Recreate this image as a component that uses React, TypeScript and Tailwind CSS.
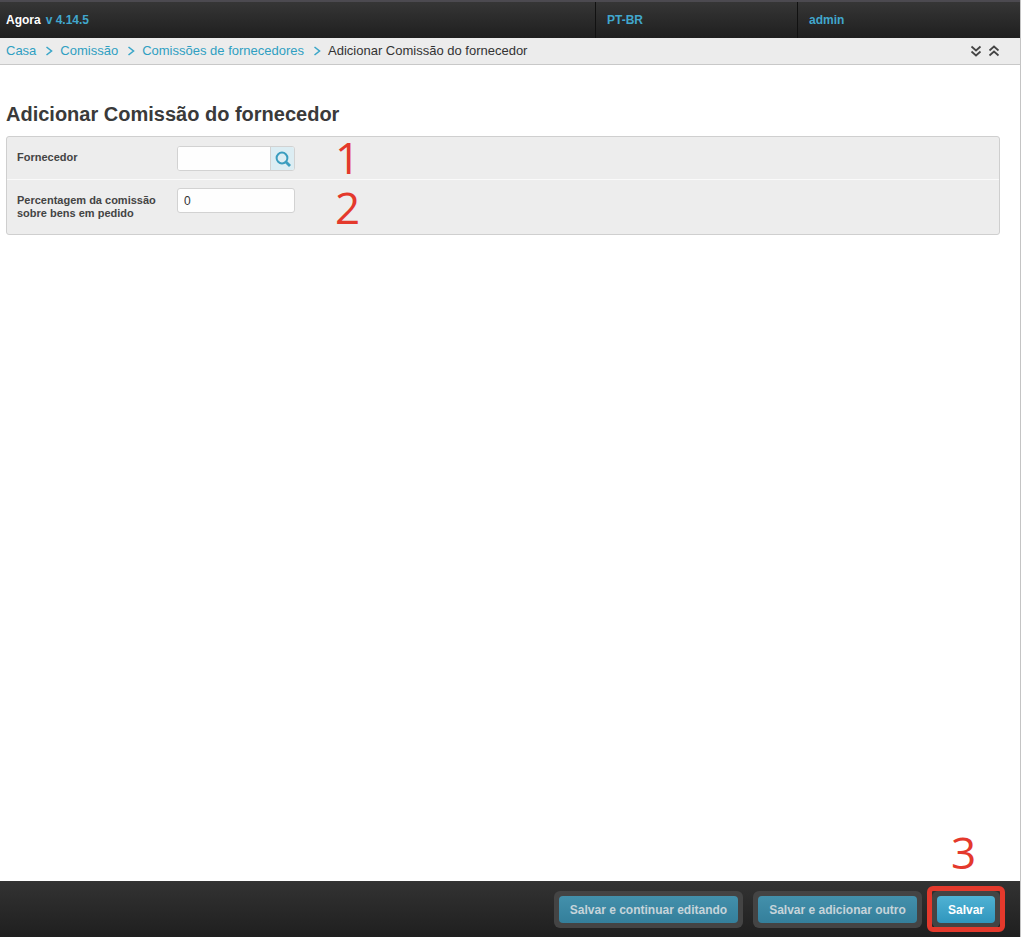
import React from "react";

const Crumb = ({ children }: { children: string }) => (
  <>
    <a className="text-[#2f9fc2]">{children}</a>
    <span className="flex w-[24px] items-center justify-center pl-[1px] text-[#3ba6c8]">
      <svg width="8" height="10" viewBox="0 0 8 10" fill="none" stroke="currentColor" strokeWidth="1.6">
        <path d="M1.5 1 L6.5 5 L1.5 9" />
      </svg>
    </span>
  </>
);

const FooterButton = ({ label, primary, width }: { label: string; primary?: boolean; width: string }) => (
  <div className="rounded-[6px] bg-[#444444] p-[5px]">
    <button
      className={`h-[27px] rounded-[4px] bg-gradient-to-b text-[12px] font-bold ${width} ${
        primary ? "from-[#4fb2d4] to-[#2f96bd] text-white" : "from-[#4390ab] to-[#347f9b] text-[#c6d4da]"
      }`}
    >
      {label}
    </button>
  </div>
);

const BigNumber = ({ value, className }: { value: string; className: string }) => (
  <span className={`absolute font-['Open_Sans',sans-serif] text-[44px] font-normal leading-[34px] text-[#e4392c] ${className}`}>
    {value}
  </span>
);

export default function App() {
  return (
    <div className="relative flex h-[937px] w-[1021px] flex-col overflow-hidden border-r border-[#c4c4c4] bg-white font-['Liberation_Sans',Arial,sans-serif]">
      <header className="flex h-[38px] border-t-2 border-[#4c4a50] bg-gradient-to-b from-[#363636] to-[#1f1f1f] text-[12px] font-bold">
        <div className="flex w-[595px] items-center pl-[6px]">
          <span className="text-white">Agora</span>
          <span className="ml-[5px] text-[#41a7cd]">v 4.14.5</span>
        </div>
        <div className="flex w-[202px] items-center border-l border-[#111111] pl-[11px] text-[#41a7cd]">PT-BR</div>
        <div className="flex flex-1 items-center border-l border-[#111111] pl-[11px] text-[#41a7cd]">admin</div>
      </header>

      <nav className="flex h-[27px] items-center border-b border-[#c8c8c8] bg-[#ececec] pl-[6px] pr-[20px] text-[13px]">
        <Crumb>Casa</Crumb>
        <Crumb>Comissão</Crumb>
        <Crumb>Comissões de fornecedores</Crumb>
        <span className="text-[#333333]">Adicionar Comissão do fornecedor</span>
        <div className="ml-auto flex gap-[6px] text-[#444444]">
          <svg width="12" height="12" viewBox="0 0 12 12" fill="none" stroke="currentColor" strokeWidth="1.7">
            <path d="M1.5 1.5 L6 5.5 L10.5 1.5 M1.5 6.5 L6 10.5 L10.5 6.5" />
          </svg>
          <svg width="12" height="12" viewBox="0 0 12 12" fill="none" stroke="currentColor" strokeWidth="1.7">
            <path d="M1.5 5.5 L6 1.5 L10.5 5.5 M1.5 10.5 L6 6.5 L10.5 10.5" />
          </svg>
        </div>
      </nav>

      <main className="flex-1 px-[6px] pt-[38px]">
        <h1 className="text-[20px] font-bold leading-[23px] text-[#3a3a3a]">Adicionar Comissão do fornecedor</h1>
        <form className="mt-[10px] w-[994px] rounded-[3px] border border-[#cfcfcf] bg-[#ededed] text-[11px] font-bold text-[#444444]">
          <div className="flex h-[43px] items-start border-b border-[#fafafa] pl-[10px] pt-[9px]">
            <label className="flex h-[22px] w-[160px] items-center">Fornecedor</label>
            <div className="flex h-[25px] w-[118px] overflow-hidden rounded-[3px] border border-[#d2d2d2] bg-white">
              <input className="w-[92px] bg-[#fefefe] outline-none" />
              <span className="flex flex-1 items-center justify-center border-l border-[#d2d2d2] bg-[#dcedf3]">
                <svg width="16" height="16" viewBox="0 0 16 16" fill="none" stroke="#3a9dbf">
                  <circle cx="7" cy="7" r="5.4" strokeWidth="2" />
                  <path d="M11 11 L15 15" strokeWidth="2.8" />
                </svg>
              </span>
            </div>
          </div>
          <div className="flex h-[54px] items-start pl-[10px] pt-[8px]">
            <label className="w-[160px] pt-[6px] leading-[13px]">
              Percentagem da comissão
              <br />
              sobre bens em pedido
            </label>
            <input
              defaultValue="0"
              className="h-[25px] w-[118px] rounded-[3px] border border-[#d2d2d2] bg-[#fefefe] px-[6px] text-[12px] font-normal text-[#333333] outline-none"
            />
          </div>
        </form>
      </main>

      <footer className="flex h-[56px] items-start justify-end gap-[10px] bg-gradient-to-b from-[#333333] to-[#1f1f1f] pr-[20px] pt-[10px]">
        <FooterButton label="Salvar e continuar editando" width="w-[179px]" />
        <FooterButton label="Salvar e adicionar outro" width="w-[159px]" />
        <FooterButton label="Salvar" primary width="w-[58px]" />
      </footer>

      <BigNumber value="1" className="left-[335px] top-[140px]" />
      <BigNumber value="2" className="left-[335px] top-[190px]" />
      <BigNumber value="3" className="left-[951px] top-[835px]" />
      <div className="absolute left-[927px] top-[886px] h-[46px] w-[78px] rounded-[6px] border-[5px] border-[#e4392c]" />
    </div>
  );
}
